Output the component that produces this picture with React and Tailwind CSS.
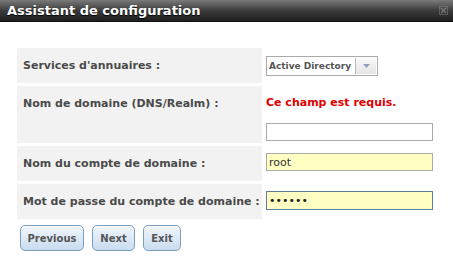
import React from 'react';

const font = { fontFamily: '"DejaVu Sans", Verdana, sans-serif' };

const Row = ({ label, children, tall }) => (
    <div className="flex">
        <div className={`w-[245px] shrink-0 bg-[#f2f2f2] pl-[6px] pt-[11px] text-[11px] font-bold leading-[14px] text-[#4a4a4a] ${tall ? 'h-[57px]' : 'h-[35px]'}`}>
            {label}
        </div>
        <div className="flex-1 pl-[4px] pt-[7px]">{children}</div>
    </div>
);

const Bouton = ({ children, w }) => (
    <button className={`${w} h-[26px] rounded-[5px] border border-[#7d9dbf] bg-gradient-to-b from-[#f1f6fc] to-[#c9dcef] text-[10px] font-bold text-[#555] shadow-[inset_0_1px_0_#fff]`}>
        {children}
    </button>
);

export default function App() {
    return (
        <div className="w-[453px] h-[265px] bg-white overflow-hidden" style={font}>
            {/* barre de titre */}
            <div className="h-[22px] flex items-center justify-between pl-[7px] pr-[5px] bg-gradient-to-b from-[#7a7a7a] via-[#3c3c3c] to-[#1e1e1e] border-b border-[#111]">
                <span className="text-[13px] font-bold text-white leading-none [text-shadow:0_1px_1px_#000]">Assistant de configuration</span>
                <svg width="9" height="9" viewBox="0 0 9 9" className="opacity-50">
                    <rect x="0.5" y="0.5" width="8" height="8" fill="none" stroke="#888" />
                    <path d="M2 2 L7 7 M7 2 L2 7" stroke="#aaa" strokeWidth="1.5" />
                </svg>
            </div>

            <div className="pl-[17px] pr-[16px] pt-[26px] flex flex-col gap-[3px]">
                <Row label="Services d'annuaires :">
                    <div className="mt-[1px] flex h-[20px] w-[112px] border border-[#aaa] bg-white">
                        <span className="flex-1 whitespace-nowrap pl-[2px] text-[9px] font-bold leading-[18px] text-[#555]">Active Directory</span>
                        <span className="w-[21px] flex items-center justify-center border-l border-[#bbb] bg-gradient-to-b from-[#fafafa] to-[#e4e4e4] m-[1px]">
                            <svg width="7" height="4" viewBox="0 0 7 4"><path d="M0 0 L7 0 L3.5 4 Z" fill="#8aa2bd" /></svg>
                        </span>
                    </div>
                </Row>
                <Row label="Nom de domaine (DNS/Realm) :" tall>
                    <div className="h-[30px] text-[11px] font-bold leading-[20px] text-[#e00000]">Ce champ est requis.</div>
                    <div className="h-[18px] w-[167px] border border-[#aaa] bg-white" />
                </Row>
                <Row label="Nom du compte de domaine :">
                    <input
                        readOnly
                        value="root"
                        className="block h-[18px] w-[167px] border border-[#aaa] bg-[#ffffc4] pl-[2px] text-[11px] text-[#333] outline-none"
                        style={font}
                    />
                </Row>
                <Row label="Mot de passe du compte de domaine :">
                    <input
                        readOnly
                        type="password"
                        value="secret"
                        className="block h-[19px] w-[167px] border border-[#5b7d9f] bg-[#ffffc4] pl-[2px] text-[11px] text-[#222] outline-none"
                        style={font}
                    />
                </Row>
            </div>

            <div className="flex gap-[8px] pl-[20px] pt-[6px]">
                <Bouton w="w-[64px]">Previous</Bouton>
                <Bouton w="w-[43px]">Next</Bouton>
                <Bouton w="w-[38px]">Exit</Bouton>
            </div>
        </div>
    );
}
